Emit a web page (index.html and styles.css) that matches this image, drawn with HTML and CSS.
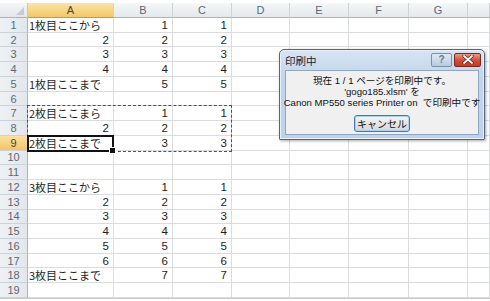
FILE: index.html
```html
<!DOCTYPE html>
<html lang="ja">
<head>
<meta charset="utf-8">
<link rel="stylesheet" href="styles.css">
</head>
<body>
<div class="sheet">
  <div class="corner"><span class="tri"></span></div>
  <div class="ch sel">A</div><div class="ch">B</div><div class="ch">C</div><div class="ch">D</div><div class="ch">E</div><div class="ch">F</div><div class="ch">G</div><div class="ch"></div>

  <div class="rh">1</div><div class="c t">1枚目ここから</div><div class="c n">1</div><div class="c n">1</div><div class="c"></div><div class="c"></div><div class="c"></div><div class="c"></div><div class="c"></div>
  <div class="rh">2</div><div class="c n">2</div><div class="c n">2</div><div class="c n">2</div><div class="c"></div><div class="c"></div><div class="c"></div><div class="c"></div><div class="c"></div>
  <div class="rh">3</div><div class="c n">3</div><div class="c n">3</div><div class="c n">3</div><div class="c"></div><div class="c"></div><div class="c"></div><div class="c"></div><div class="c"></div>
  <div class="rh">4</div><div class="c n">4</div><div class="c n">4</div><div class="c n">4</div><div class="c"></div><div class="c"></div><div class="c"></div><div class="c"></div><div class="c"></div>
  <div class="rh">5</div><div class="c t">1枚目ここまで</div><div class="c n">5</div><div class="c n">5</div><div class="c"></div><div class="c"></div><div class="c"></div><div class="c"></div><div class="c"></div>
  <div class="rh">6</div><div class="c"></div><div class="c"></div><div class="c"></div><div class="c"></div><div class="c"></div><div class="c"></div><div class="c"></div><div class="c"></div>
  <div class="rh">7</div><div class="c t">2枚目ここまら</div><div class="c n">1</div><div class="c n">1</div><div class="c"></div><div class="c"></div><div class="c"></div><div class="c"></div><div class="c"></div>
  <div class="rh">8</div><div class="c n">2</div><div class="c n">2</div><div class="c n">2</div><div class="c"></div><div class="c"></div><div class="c"></div><div class="c"></div><div class="c"></div>
  <div class="rh sel">9</div><div class="c t">2枚目ここまで</div><div class="c n">3</div><div class="c n">3</div><div class="c"></div><div class="c"></div><div class="c"></div><div class="c"></div><div class="c"></div>
  <div class="rh">10</div><div class="c"></div><div class="c"></div><div class="c"></div><div class="c"></div><div class="c"></div><div class="c"></div><div class="c"></div><div class="c"></div>
  <div class="rh">11</div><div class="c"></div><div class="c"></div><div class="c"></div><div class="c"></div><div class="c"></div><div class="c"></div><div class="c"></div><div class="c"></div>
  <div class="rh">12</div><div class="c t">3枚目ここから</div><div class="c n">1</div><div class="c n">1</div><div class="c"></div><div class="c"></div><div class="c"></div><div class="c"></div><div class="c"></div>
  <div class="rh">13</div><div class="c n">2</div><div class="c n">2</div><div class="c n">2</div><div class="c"></div><div class="c"></div><div class="c"></div><div class="c"></div><div class="c"></div>
  <div class="rh">14</div><div class="c n">3</div><div class="c n">3</div><div class="c n">3</div><div class="c"></div><div class="c"></div><div class="c"></div><div class="c"></div><div class="c"></div>
  <div class="rh">15</div><div class="c n">4</div><div class="c n">4</div><div class="c n">4</div><div class="c"></div><div class="c"></div><div class="c"></div><div class="c"></div><div class="c"></div>
  <div class="rh">16</div><div class="c n">5</div><div class="c n">5</div><div class="c n">5</div><div class="c"></div><div class="c"></div><div class="c"></div><div class="c"></div><div class="c"></div>
  <div class="rh">17</div><div class="c n">6</div><div class="c n">6</div><div class="c n">6</div><div class="c"></div><div class="c"></div><div class="c"></div><div class="c"></div><div class="c"></div>
  <div class="rh">18</div><div class="c t">3枚目ここまで</div><div class="c n">7</div><div class="c n">7</div><div class="c"></div><div class="c"></div><div class="c"></div><div class="c"></div><div class="c"></div>
  <div class="rh">19</div><div class="c"></div><div class="c"></div><div class="c"></div><div class="c"></div><div class="c"></div><div class="c"></div><div class="c"></div><div class="c"></div>

  <div class="ants"></div>
  <div class="active"><span class="handle"></span></div>
</div>

<div class="dialog">
  <div class="titlebar">
    <span class="title">印刷中</span>
    <div class="tbtns">
      <span class="help">?</span>
      <span class="close"><svg width="12" height="9" viewBox="0 0 12 9"><path d="M2 1 L10 8 M10 1 L2 8" stroke="#5a1a10" stroke-width="3.2" stroke-linecap="round"/><path d="M2 1 L10 8 M10 1 L2 8" stroke="#fff" stroke-width="1.8" stroke-linecap="round"/></svg></span>
    </div>
  </div>
  <div class="dbody">
    <p class="msg">現在 1 / 1 ページを印刷中です。</p>
    <p class="msg">'gogo185.xlsm' を</p>
    <p class="msg">Canon MP550 series Printer on &nbsp;で印刷中です</p>
    <button class="btn">キャンセル</button>
  </div>
</div>
</body>
</html>
```

FILE: styles.css
```css
html, body {
  margin: 0;
  padding: 0;
  background: #fff;
}
body {
  padding-top: 3px;
  font-family: "Liberation Sans", "Noto Sans CJK JP", sans-serif;
  width: 490px;
  height: 301px;
  overflow: hidden;
}
.sheet {
  position: relative;
  display: grid;
  grid-template-columns: 28px 86px 59px 59px 58px 59px 60px 59px 22px;
  grid-template-rows: 15px repeat(19, 14.74px);
  border-bottom: 1px solid #c8c8c8;
  width: 490px;
}
.corner {
  position: relative;
  background: linear-gradient(#f4f6f8, #e3e7ec);
  border-right: 1px solid #c2c8d0;
  border-bottom: 1px solid #aab3bf;
}
.tri {
  position: absolute;
  right: 3px;
  bottom: 2px;
  width: 0;
  height: 0;
  border-left: 8px solid transparent;
  border-bottom: 8px solid #c7cbd1;
}
.ch {
  background: linear-gradient(#f5f7f9, #e4e8ed);
  border-right: 1px solid #cdd2d9;
  border-bottom: 1px solid #aab3bf;
  color: #5d6877;
  font-size: 11px;
  display: flex;
  align-items: center;
  justify-content: center;
}
.ch.sel {
  background: linear-gradient(#fbe3a9, #f4c766);
  border-bottom-color: #c29b4a;
  color: #4e4530;
}
.rh {
  background: linear-gradient(90deg, #eef1f4, #e3e7ec);
  border-right: 1px solid #aab3bf;
  border-bottom: 1px solid #cdd2d9;
  color: #5d6877;
  font-size: 11px;
  display: flex;
  align-items: center;
  justify-content: center;
}
.rh.sel {
  background: linear-gradient(#fbe0a2, #f3c564);
  color: #4e4530;
}
.c {
  border-right: 1px solid #dadcdd;
  border-bottom: 1px solid #dadcdd;
  font-size: 11px;
  color: #1e1e1e;
  display: flex;
  align-items: center;
  white-space: nowrap;
  overflow: visible;
}
.c.t {
  padding-left: 1px;
  font-family: "Noto Sans CJK JP", sans-serif;
}
.c.n {
  justify-content: flex-end;
  padding-right: 4px;
  font-size: 11.5px;
}
.ants {
  position: absolute;
  grid-column: 2 / 5;
  grid-row: 8 / 11;
  inset: -1px 0 -1px -1px;
  border: 1.5px dashed #505050;
  pointer-events: none;
}
.active {
  position: absolute;
  grid-column: 2 / 3;
  grid-row: 10 / 11;
  inset: -1px 0 -1px -1px;
  border: 2px solid #111;
}
.handle {
  position: absolute;
  right: -4px;
  bottom: -4px;
  width: 5px;
  height: 5px;
  background: #111;
  border: 1px solid #fff;
}

/* dialog window */
.dialog {
  position: absolute;
  left: 279px;
  top: 49px;
  width: 206px;
  height: 91px;
  box-sizing: border-box;
  border: 1px solid #52667f;
  border-radius: 5px 5px 1px 1px;
  background: linear-gradient(#d7e4f3, #c3d5ea 30%, #bfd2e9);
  box-shadow: 1px 1px 3px rgba(0,0,0,0.35), inset 0 0 0 1px #e8f0fa;
  display: flex;
  flex-direction: column;
}
.titlebar {
  height: 20px;
  display: flex;
  align-items: center;
  justify-content: space-between;
  padding: 0 3px 0 5px;
}
.title {
  font-family: "Noto Sans CJK JP", sans-serif;
  font-size: 10.5px;
  color: #1b2230;
}
.tbtns {
  display: flex;
  align-items: center;
  gap: 2px;
  margin-top: -1px;
}
.help {
  width: 21px;
  height: 14px;
  box-sizing: border-box;
  border: 1px solid #7d90ab;
  border-radius: 2px;
  background: linear-gradient(#dfe8f3, #b8cbe1);
  color: #6a7890;
  font-size: 10px;
  font-weight: bold;
  display: flex;
  align-items: center;
  justify-content: center;
}
.close {
  width: 27px;
  height: 14px;
  box-sizing: border-box;
  border: 1px solid #7a2a1c;
  border-radius: 2px;
  background: linear-gradient(#e89a88, #d0523c 50%, #c13c26);
  display: flex;
  align-items: center;
  justify-content: center;
}
.dbody {
  flex: 1;
  margin: 0 5px 4px;
  border: 1px solid #8fa5c1;
  background: #f0f0f0;
  display: flex;
  flex-direction: column;
  align-items: center;
  padding-top: 4px;
}
.msg {
  margin: 0;
  font-size: 9.6px;
  line-height: 11px;
  color: #111;
  white-space: nowrap;
}
.btn {
  margin-top: 7px;
  width: 56px;
  height: 17px;
  padding: 0;
  border: 1px solid #3d7bad;
  border-radius: 3px;
  background: linear-gradient(#f4f4f4, #e6e6e6 50%, #d6d6d6);
  box-shadow: inset 0 0 0 1px #a9d3f0;
  font-family: "Noto Sans CJK JP", sans-serif;
  font-size: 10px;
  color: #111;
  line-height: 1;
}
```
